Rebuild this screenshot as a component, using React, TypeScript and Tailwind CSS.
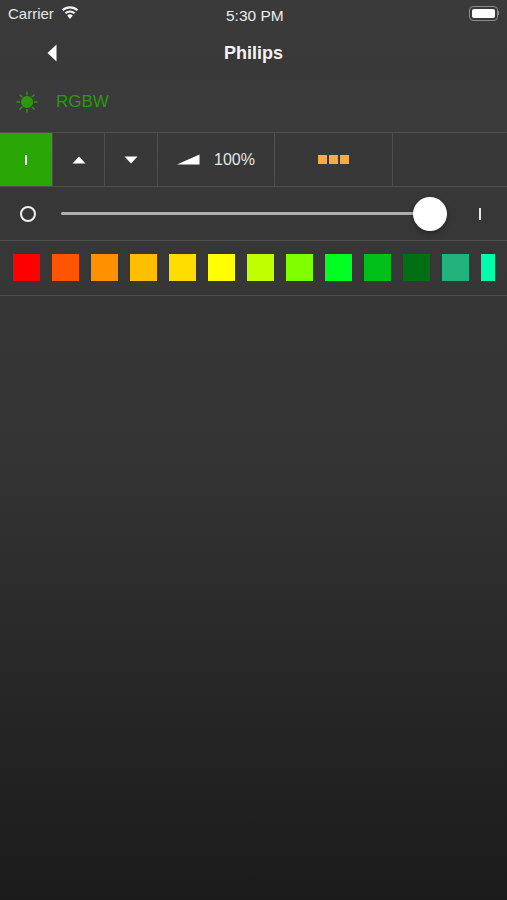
import React from 'react';

const SWATCHES = [
    '#ff0000', '#ff5500', '#ff9100', '#ffbf00', '#ffdd00', '#ffff00', '#bfff00',
    '#80ff00', '#00ff22', '#00bf18', '#006f12', '#22b27c',
];

function SunIcon() {
    return (
        <svg width="22" height="22" viewBox="0 0 22 22" className="text-[#2a9a0c]">
            <circle cx="11" cy="11" r="6" fill="currentColor" />
            <g stroke="currentColor" strokeWidth="1.5" strokeLinecap="round">
                <path d="M11 1v2.5M11 18.5V21M1 11h2.5M18.5 11H21M4 4l1.8 1.8M16.2 16.2 18 18M4 18l1.8-1.8M16.2 5.800 18 4" />
            </g>
        </svg>
    );
}

function ToolCell({ className, children }: { className: string; children?: React.ReactNode }) {
    return (
        <div className={`flex h-full shrink-0 items-center justify-center border-r-[1.5px] border-[#4e4e4e] ${className}`}>
            {children}
        </div>
    );
}

export default function App() {
    return (
        <div className="flex h-[900px] w-[507px] flex-col overflow-hidden bg-gradient-to-b from-[#3a3a3a] via-[#343434] to-[#1b1b1b] font-['Liberation_Sans',sans-serif] text-white">
            {/* Status bar */}
            <div className="relative flex h-[28px] shrink-0 items-center justify-between px-[8px] text-[15px] text-[#e6e6e6]">
                <div className="flex items-center gap-[7px]">
                    <span>Carrier</span>
                    <svg width="18" height="13" viewBox="0 0 18 13" className="-mt-[3px]">
                        <path d="M9 13 6.200 9.500a4 4 0 0 1 5.600 0Z" fill="#f4f4f4" />
                        <path d="M4.400 7.300a6.800 6.800 0 0 1 9.200 0" stroke="#f4f4f4" strokeWidth="2.100" fill="none" />
                        <path d="M1.500 4.300a11 11 0 0 1 15 0" stroke="#f4f4f4" strokeWidth="2.100" fill="none" />
                    </svg>
                </div>
                <span className="absolute left-[226px] top-[4px] text-[15.500px] text-[#ececec]">5:30 PM</span>
                <div className="flex items-center">
                    <div className="-mt-[2px] flex h-[15px] w-[29px] items-center rounded-[4px] border border-[#8a8a8a] p-[2px]">
                        <div className="h-full w-full rounded-[2px] bg-white" />
                    </div>
                    <div className="-mt-[2px] h-[4px] w-[1px] bg-[#8a8a8a]" />
                </div>
            </div>

            {/* Nav bar */}
            <div className="relative flex h-[52px] shrink-0 items-center justify-center">
                <svg width="10" height="18" viewBox="0 0 10 18" className="absolute left-[47px] top-[16px]">
                    <path d="M9.500 0.500v17L0.500 9Z" fill="#ffffff" />
                </svg>
                <span className="-mt-[2px] text-[18px] font-bold text-[#f4f4f4]">Philips</span>
            </div>

            {/* Device row */}
            <div className="flex h-[52px] shrink-0 items-center gap-[18px] bg-[#3b3b3b] pb-[8px] pl-[16px]">
                <SunIcon />
                <span className="text-[17px] text-[#2a9a0c]">RGBW</span>
            </div>

            {/* Toolbar */}
            <div className="flex h-[55px] shrink-0 items-stretch border-y-[1.5px] border-[#4e4e4e]">
                <ToolCell className="w-[53px] border-r-0 bg-[#2aa706]">
                    <div className="h-[10px] w-[2px] bg-[#e8f5e0]" />
                </ToolCell>
                <ToolCell className="w-[52px]">
                    <svg width="14" height="8" viewBox="0 0 14 8">
                        <path d="M7 0.500 13.500 7.500H0.500Z" fill="#ffffff" />
                    </svg>
                </ToolCell>
                <ToolCell className="w-[53px]">
                    <svg width="14" height="8" viewBox="0 0 14 8">
                        <path d="M7 7.500 13.500 0.500H0.500Z" fill="#ffffff" />
                    </svg>
                </ToolCell>
                <ToolCell className="w-[117px] gap-[14px]">
                    <svg width="23" height="11" viewBox="0 0 23 11">
                        <path d="M0 10.500 22.500 0.500V10.500Z" fill="#ffffff" />
                    </svg>
                    <span className="text-[16px] text-[#e4e4e4]">100%</span>
                </ToolCell>
                <ToolCell className="w-[118px] gap-[2px]">
                    <div className="size-[9px] bg-[#f9a94a]" />
                    <div className="size-[9px] bg-[#f9a94a]" />
                    <div className="size-[9px] bg-[#f9a94a]" />
                </ToolCell>
            </div>

            {/* Slider row */}
            <div className="flex h-[54px] shrink-0 items-center border-b-[1.5px] border-[#4e4e4e] pl-[20px]">
                <div className="size-[16px] shrink-0 rounded-full border-2 border-[#f0f0f0]" />
                <div className="relative ml-[25px] flex h-[34px] w-[386px] shrink-0 items-center">
                    <div className="h-[3px] w-full rounded-full bg-[#b0b0b0]" />
                    <div className="absolute right-0 top-0 size-[34px] rounded-full bg-white shadow-[0_2px_5px_rgba(0,0,0,0.35)]" />
                </div>
                <div className="ml-[32px] h-[12px] w-[2px] shrink-0 bg-[#e8e8e8]" />
            </div>

            {/* Colour swatches */}
            <div className="flex h-[55px] shrink-0 items-center gap-[12px] overflow-hidden border-b-[1.5px] border-[#4e4e4e] pb-[1px] pl-[12.500px]">
                {SWATCHES.map((color) => (
                    <div key={color} className="h-[27px] w-[27px] shrink-0" style={{ background: color }} />
                ))}
                <div className="h-[27px] w-[14px] shrink-0 bg-[#00ffaa]" />
            </div>
        </div>
    );
}
